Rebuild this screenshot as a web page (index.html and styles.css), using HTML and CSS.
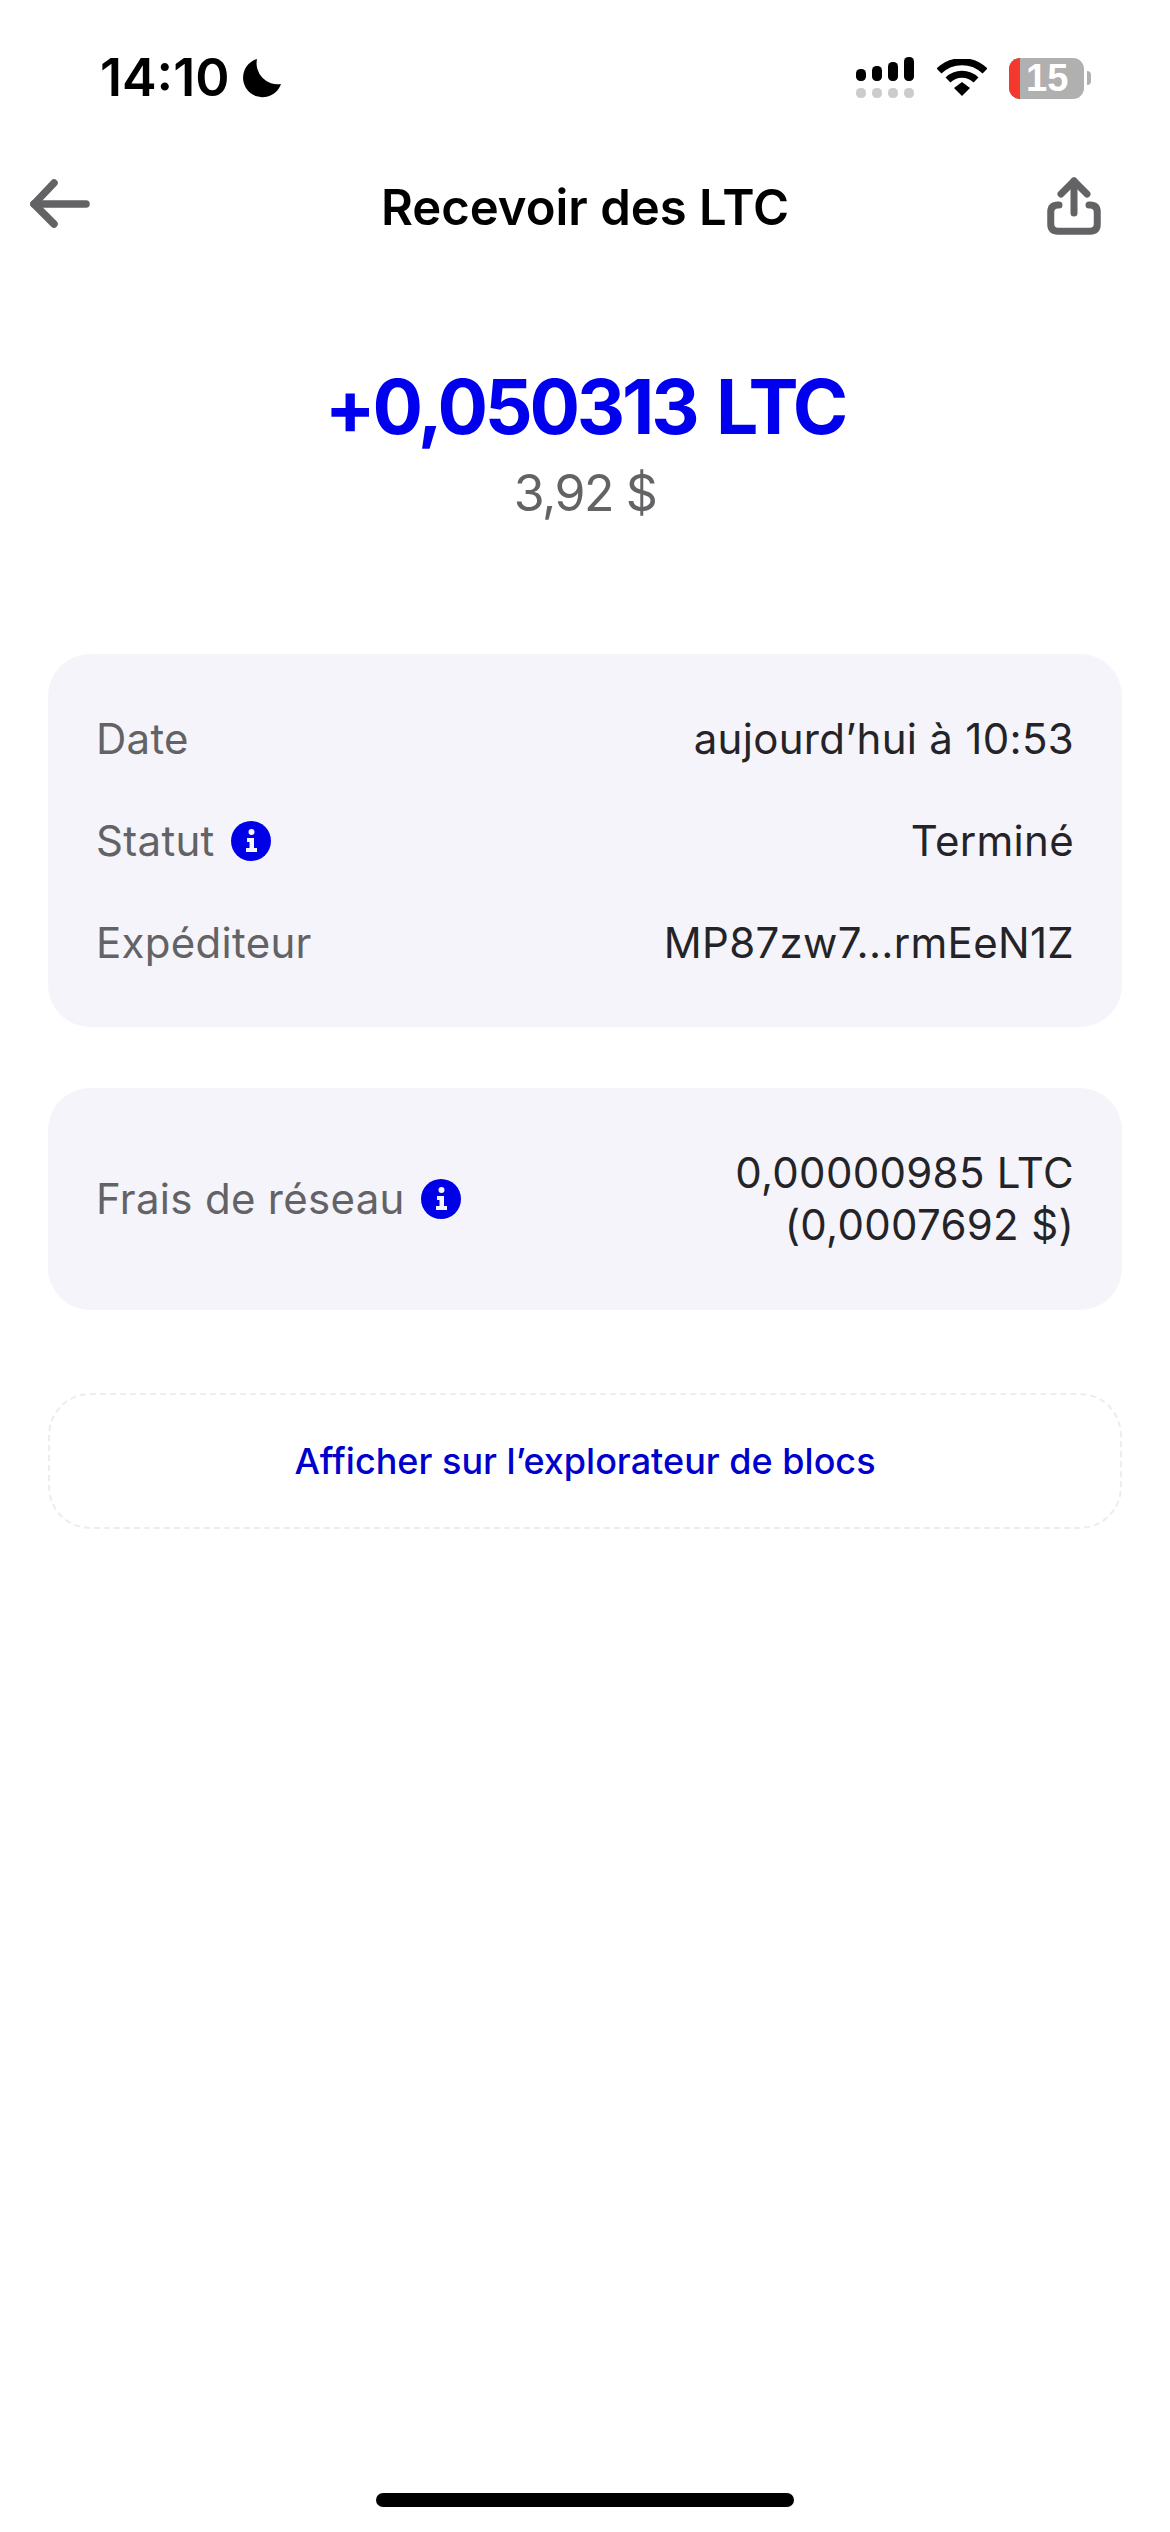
FILE: index.html
```html
<!DOCTYPE html>
<html lang="fr">
<head>
<meta charset="UTF-8">
<meta name="viewport" content="width=device-width, initial-scale=1.0">
<title>Recevoir des LTC</title>
<link rel="stylesheet" href="styles.css">
</head>
<body>

<div class="screen">
    <div class="status-bar">
        <div class="status-left">
            <span class="clock">14:10</span>
            <svg class="moon" width="40" height="40" viewBox="0 0 40 40"><path d="M15 1 A19.500 19.500 0 1 0 39 26 A21 21 0 0 1 15 1 Z" fill="#000"/></svg>
        </div>
        <div class="status-right">
            <svg width="60" height="42" viewBox="0 0 60 42">
                <rect x="1" y="12" width="10" height="12" rx="4.500" fill="#000"/>
                <rect x="17" y="9" width="10" height="15" rx="4.500" fill="#000"/>
                <rect x="33" y="5" width="10" height="19" rx="4.500" fill="#000"/>
                <rect x="49" y="0" width="10" height="24" rx="4.500" fill="#000"/>
                <rect x="1" y="31" width="10" height="10" rx="4.500" fill="#ccc"/>
                <rect x="17" y="31" width="10" height="10" rx="4.500" fill="#ccc"/>
                <rect x="33" y="31" width="10" height="10" rx="4.500" fill="#ccc"/>
                <rect x="49" y="31" width="10" height="10" rx="4.500" fill="#ccc"/>
            </svg>
            <svg width="50" height="38" viewBox="0 0 50 38">
                <path d="M2 12 A33 33 0 0 1 48 12" fill="none" stroke="#000" stroke-width="7"/>
                <path d="M11 21 A20 20 0 0 1 39 21" fill="none" stroke="#000" stroke-width="7"/>
                <path d="M17 29 L25 23 L33 29 L25 37 Z" fill="#000"/>
            </svg>
            <div class="battery">
                <div class="battery-body">
                    <div class="battery-low"></div>
                    <span class="battery-num">15</span>
                </div>
                <div class="battery-tip"></div>
            </div>
        </div>
    </div>

    <div class="nav">
        <svg class="nav-back" width="64" height="56" viewBox="0 0 64 56" fill="none" stroke="#636366" stroke-width="7.500" stroke-linecap="round" stroke-linejoin="round">
            <path d="M58 28 H6"/>
            <path d="M26 7 L6 28 L26 48"/>
        </svg>
        <h1 class="nav-title">Recevoir des LTC</h1>
        <svg class="nav-share" width="54" height="59" viewBox="0 0 54 59" fill="none" stroke="#636366" stroke-width="7" stroke-linecap="round" stroke-linejoin="round">
            <path d="M27 37 V5"/>
            <path d="M14 18 L27 5 L40 18"/>
            <path d="M12 29 H11 Q3.750 29 3.750 36 V48 Q3.750 55.250 11 55.250 H43 Q50.250 55.250 50.250 48 V36 Q50.250 29 43 29 H42"/>
        </svg>
    </div>

    <div class="amount">
        <div class="amount-main">+0,050313 LTC</div>
        <div class="amount-fiat">3,92 $</div>
    </div>

    <div class="card card-details">
        <div class="row">
            <span class="label">Date</span>
            <span class="value">aujourd’hui à 10:53</span>
        </div>
        <div class="row">
            <span class="label">Statut <svg width="40" height="40" viewBox="0 0 40 40"><circle cx="20" cy="20" r="20" fill="#0000e6"/><circle cx="20.500" cy="11" r="3" fill="#f4f4fa"/><path d="M16 17 H23 V27 H26 V31 H15 V27 H18.500 V21 H16 Z" fill="#f4f4fa"/></svg></span>
            <span class="value">Terminé</span>
        </div>
        <div class="row">
            <span class="label">Expéditeur</span>
            <span class="value">MP87zw7...rmEeN1Z</span>
        </div>
    </div>

    <div class="card card-fee">
        <span class="label">Frais de réseau <svg width="40" height="40" viewBox="0 0 40 40"><circle cx="20" cy="20" r="20" fill="#0000e6"/><circle cx="20.500" cy="11" r="3" fill="#f4f4fa"/><path d="M16 17 H23 V27 H26 V31 H15 V27 H18.500 V21 H16 Z" fill="#f4f4fa"/></svg></span>
        <span class="value fee-value">0,00000985 LTC<br>(0,0007692 $)</span>
    </div>

    <div class="explorer">Afficher sur l’explorateur de blocs</div>

    <div class="home-bar"></div>
</div>

</body>
</html>
```

FILE: styles.css
```css
* {
    box-sizing: border-box;
}
body {
    margin: 0;
    padding: 0;
    background-color: #fff;
    font-family: Inter, "Liberation Sans", sans-serif;
    color: #242428;
}
.screen {
    height: 2532px;
    display: flex;
    flex-direction: column;
    overflow: hidden;
}
.status-bar {
    height: 106px;
    padding: 50px 0 0 100px;
    display: flex;
    justify-content: space-between;
    align-items: center;
}
.status-left {
    display: flex;
    align-items: center;
    gap: 12px;
}
.clock {
    font-size: 52px;
    font-weight: 600;
    line-height: 56px;
    color: #000;
}
.status-right {
    display: flex;
    align-items: center;
    gap: 22px;
    padding-right: 79px;
}
.battery {
    display: flex;
    align-items: center;
    gap: 3px;
}
.battery-body {
    width: 75px;
    height: 41px;
    border-radius: 11px;
    background-color: #b0b0b0;
    display: flex;
    align-items: center;
    overflow: hidden;
}
.battery-low {
    width: 11px;
    height: 100%;
    background-color: #f5382e;
}
.battery-num {
    margin-left: 6px;
    font-family: "Liberation Sans", sans-serif;
    font-size: 38px;
    font-weight: 700;
    color: #fff;
}
.battery-tip {
    width: 4px;
    height: 14px;
    border-radius: 0 4px 4px 0;
    background-color: #b0b0b0;
}
.nav {
    height: 106px;
    margin-top: 48px;
    display: grid;
    grid-template-columns: 1fr auto 1fr;
    align-items: center;
}
.nav-back {
    margin: 0 0 6px 28px;
}
.nav-share {
    justify-self: end;
    margin: 0 69px 3px 0;
}
.nav-title {
    margin: 0;
    font-size: 49px;
    font-weight: 600;
    color: #000;
}
.amount {
    margin-top: 102px;
    text-align: center;
}
.amount-main {
    font-size: 75px;
    line-height: 90px;
    font-weight: 700;
    letter-spacing: -3.200px;
    word-spacing: 5px;
    color: #0000ee;
}
.amount-fiat {
    margin-top: 11px;
    font-size: 50px;
    line-height: 60px;
    letter-spacing: -1.500px;
    color: #636366;
}
.card {
    margin: 0 48px;
    border-radius: 42px;
    background-color: #f4f4fa;
    padding: 0 48px;
}
.card-details {
    margin-top: 131px;
    height: 373px;
    padding-top: 34px;
    display: flex;
    flex-direction: column;
}
.row {
    height: 102px;
    display: flex;
    justify-content: space-between;
    align-items: center;
}
.label, .value {
    font-size: 42px;
    line-height: 52px;
    letter-spacing: 0.300px;
}
.label {
    color: #636366;
    display: flex;
    align-items: center;
    gap: 16px;
}
.card-fee {
    margin-top: 61px;
    height: 222px;
    display: flex;
    justify-content: space-between;
    align-items: center;
}
.fee-value {
    text-align: right;
}
.explorer {
    margin: 83px 48px 0;
    height: 136px;
    border: 2px dashed #ececf1;
    border-radius: 42px;
    display: flex;
    justify-content: center;
    align-items: center;
    font-size: 36px;
    font-weight: 500;
    color: #0000cc;
}
.home-bar {
    width: 418px;
    height: 14px;
    margin: auto auto 25px;
    border-radius: 7px;
    background-color: #000;
}
```
